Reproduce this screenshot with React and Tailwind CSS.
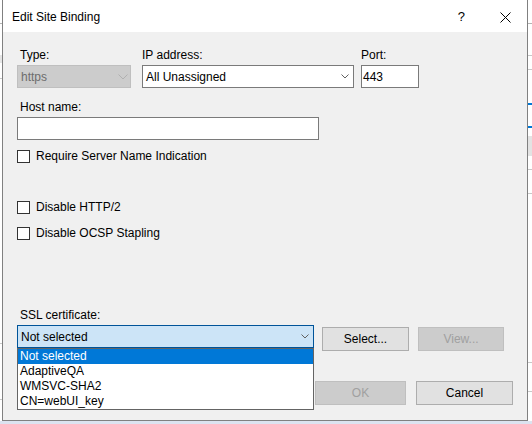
import React from "react";

const FONT = "font-['Liberation_Sans','Arial',sans-serif]";

function Chevron({ color = "#606060" }) {
  return (
    <svg width="8" height="5" viewBox="0 0 8 5" className="shrink-0">
      <polyline points="0.5,0.5 4,4 7.5,0.5" fill="none" stroke={color} strokeWidth="1" />
    </svg>
  );
}

function Checkbox({ label }) {
  return (
    <div className="flex items-center h-[16px]">
      <div className="w-[13px] h-[13px] border border-[#333333] bg-white shrink-0" />
      <span className="ml-[6px] leading-[16px] text-black">{label}</span>
    </div>
  );
}

export default function App() {
  return (
    <div className={`relative w-[532px] h-[424px] bg-white overflow-hidden text-[12px] text-black ${FONT}`}>
      {/* desktop / background window fragments */}
      <div className="absolute left-0 top-[23px] w-[3px] h-px bg-[#b4b4b4]" />
      <div className="absolute left-0 top-[55px] w-[3px] h-[8px] bg-[#e6e6e6]" />
      <div className="absolute left-0 top-[78px] w-[3px] h-px bg-[#c8c8c8]" />
      <div className="absolute left-0 top-[343px] w-[3px] h-px bg-[#c8c8c8]" />
      <div className="absolute left-0 top-[399px] w-[3px] h-px bg-[#c8c8c8]" />
      <div className="absolute right-0 top-[23px] w-[4px] h-px bg-[#b4b4b4]" />
      <div className="absolute right-0 top-[55px] w-[4px] h-px bg-[#c8c8c8]" />
      <div className="absolute right-0 top-[69px] w-[4px] h-px bg-[#c8c8c8]" />
      <div className="absolute right-0 top-[103px] w-[4px] h-[2px] bg-[#0078d7]" />
      <div className="absolute right-0 top-[126px] w-[4px] h-[2px] bg-[#0078d7]" />
      <div className="absolute right-0 top-[136px] w-[4px] h-[20px] bg-[#e3e3e3]" />
      <div className="absolute right-0 top-[169px] w-[4px] h-px bg-[#c8c8c8]" />
      <div className="absolute right-0 top-[193px] w-[4px] h-px bg-[#c8c8c8]" />
      <div className="absolute right-0 top-[362px] w-[4px] h-px bg-[#c8c8c8]" />
      <div className="absolute right-0 top-[391px] w-[4px] h-px bg-[#c8c8c8]" />
      <div className="absolute left-0 bottom-0 w-full h-[3px] bg-[#dce3f0]" />

      {/* dialog window */}
      <div className="absolute left-[2px] top-0 w-[526px] h-[421px] border-x border-b border-[#808080] bg-[#f0f0f0] flex flex-col">
        {/* title bar */}
        <div className="h-[32px] bg-white flex items-center shrink-0 pt-[2px]">
          <span className="pl-[9px] text-[12px] text-black">Edit Site Binding</span>
          <span className="ml-auto text-[13px] text-black">?</span>
          <svg width="11" height="11" viewBox="0 0 11 11" className="ml-[35px] mr-[16px]">
            <path d="M0.5 0.5 L10.5 10.5 M10.5 0.5 L0.5 10.5" stroke="#000" strokeWidth="1" />
          </svg>
        </div>

        {/* body */}
        <div className="flex-1 flex flex-col pl-[14px]">
          {/* row 1 */}
          <div className="flex mt-[15px]">
            <div className="flex flex-col w-[114px]">
              <span className="pl-[3px] h-[16px] leading-[16px]">Type:</span>
              <div className="mt-[2px] h-[23px] bg-[#cccccc] border border-[#bfbfbf] flex items-center pl-[3px] pr-[2px]">
                <span className="text-[#6d6d6d] leading-[16px]">https</span>
                <span className="ml-auto">
                  <svg width="10" height="6" viewBox="0 0 10 6" className="shrink-0">
                    <polyline points="0.5,0.5 5,5 9.5,0.5" fill="none" stroke="#b0b0b0" strokeWidth="1" />
                  </svg>
                </span>
              </div>
            </div>
            <div className="flex flex-col w-[212px] ml-[11px]">
              <span className="h-[16px] leading-[16px]">IP address:</span>
              <div className="mt-[2px] h-[23px] bg-white border border-[#7a7a7a] flex items-center pl-[3px] pr-[4px]">
                <span className="leading-[16px]">All Unassigned</span>
                <span className="ml-auto"><Chevron /></span>
              </div>
            </div>
            <div className="flex flex-col w-[58px] ml-[7px]">
              <span className="h-[16px] leading-[16px]">Port:</span>
              <div className="mt-[2px] h-[23px] bg-white border border-[#7a7a7a] flex items-center pl-[1px]">
                <span className="leading-[16px]">443</span>
              </div>
            </div>
          </div>

          {/* host name */}
          <span className="mt-[11px] pl-[3px] h-[16px] leading-[16px]">Host name:</span>
          <div className="mt-[2px] w-[302px] h-[23px] bg-white border border-[#7a7a7a]" />

          <div className="mt-[8px]">
            <Checkbox label="Require Server Name Indication" />
          </div>
          <div className="mt-[35px]">
            <Checkbox label="Disable HTTP/2" />
          </div>
          <div className="mt-[10px]">
            <Checkbox label="Disable OCSP Stapling" />
          </div>

          {/* SSL certificate */}
          <span className="mt-[66px] pl-[3px] h-[16px] leading-[16px]">SSL certificate:</span>
          <div className="flex mt-[2px] h-[26px] items-start">
            <div className="relative w-[297px]">
              <div className="h-[23px] bg-[#cce4f7] border border-[#005499] flex items-center pl-[3px] pr-[4px]">
                <span className="leading-[16px]">Not selected</span>
                <span className="ml-auto"><Chevron /></span>
              </div>
              <div className="absolute left-0 top-full w-full bg-white border border-[#646464] z-10">
                <div className="h-[15px] leading-[15px] pl-[2px] bg-[#0078d7] text-white">Not selected</div>
                <div className="h-[15px] leading-[15px] pl-[2px]">AdaptiveQA</div>
                <div className="h-[15px] leading-[15px] pl-[2px]">WMSVC-SHA2</div>
                <div className="h-[15px] leading-[15px] pl-[2px]">CN=webUI_key</div>
              </div>
            </div>
            <button className="ml-[8px] mt-[2px] w-[87px] h-[24px] bg-[#e1e1e1] border border-[#adadad] flex items-center justify-center leading-[16px]">
              Select...
            </button>
            <button className="ml-[9px] mt-[2px] w-[86px] h-[24px] bg-[#cccccc] border border-[#bfbfbf] flex items-center justify-center text-[#a0a0a0] leading-[16px]">
              View...
            </button>
          </div>

          {/* OK / Cancel */}
          <div className="flex justify-end mt-[30px] pr-[14px]">
            <button className="w-[91px] h-[24px] bg-[#cccccc] border border-[#bfbfbf] flex items-center justify-center text-[#a0a0a0] leading-[16px]">
              OK
            </button>
            <button className="ml-[10px] w-[97px] h-[24px] bg-[#e1e1e1] border border-[#adadad] flex items-center justify-center leading-[16px]">
              Cancel
            </button>
          </div>
        </div>
      </div>
    </div>
  );
}
